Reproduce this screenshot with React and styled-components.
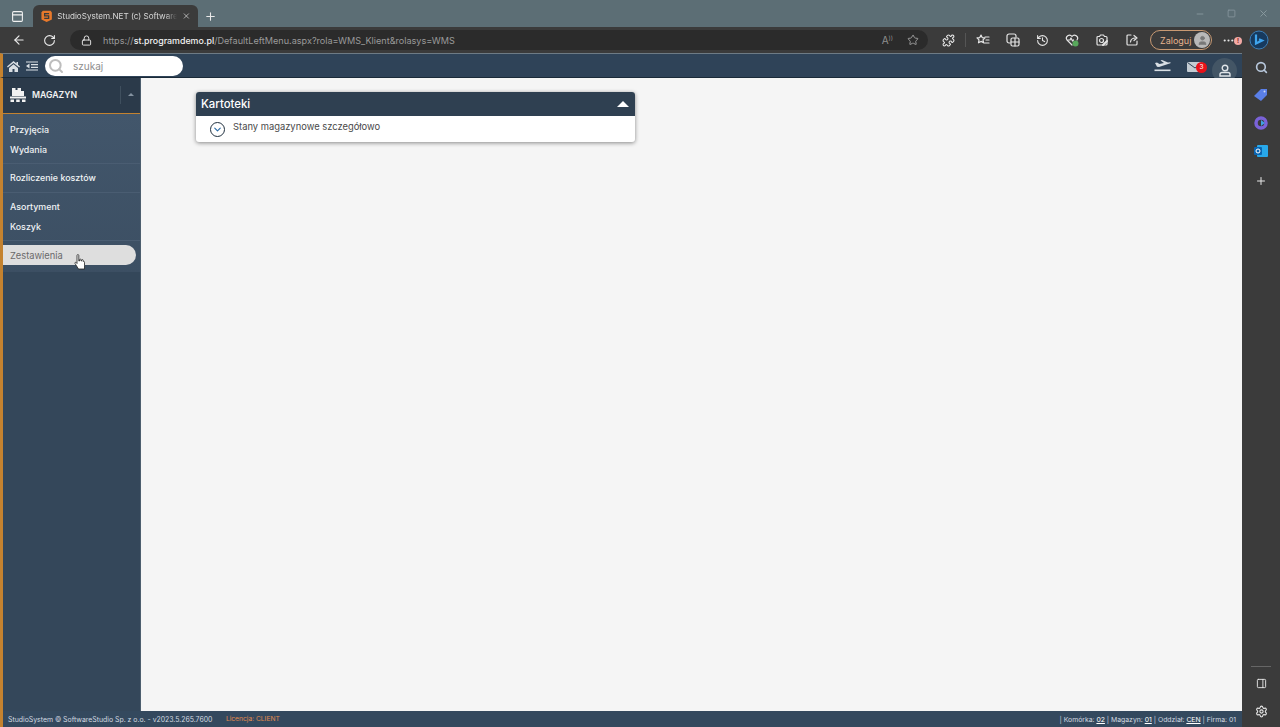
import React from "react";
import styled, { createGlobalStyle } from "styled-components";
import { Search, ChevronDown, Plus, X, RotateCw, ArrowLeft, Lock, Star, Puzzle, History, Settings, Minus, Square, PanelRight, User, MoreHorizontal, PanelTop } from "lucide-react";

const Global = createGlobalStyle`
  html, body { margin: 0; padding: 0; width: 1280px; height: 727px; overflow: hidden; }
  body { font-family: "Inter", "Liberation Sans", sans-serif; background: #3b3b3b; }
  * { box-sizing: border-box; }
`;
const Frame = styled.div`width:1280px;height:727px;display:flex;flex-direction:column;overflow:hidden;`;
const TabStrip = styled.div`height:27px;background:#5c6e75;display:flex;align-items:flex-end;padding-left:8px;color:#e8e8e8;flex:none;`;
const SquareBtn = styled.div`width:18px;height:22px;display:flex;align-items:center;justify-content:center;margin-right:7px;color:#f2f2f2;`;
const Tab = styled.div`width:165px;height:22px;background:#3b3b3b;border-radius:6px 6px 0 0;display:flex;align-items:center;padding:0 7px 0 8px;font-size:8.1px;color:#d8d8d8;white-space:nowrap;`;
const TabTitle = styled.span`width:120px;flex:none;margin:0 5px 0 5px;mask-image:linear-gradient(90deg,#000 90%,transparent);`;
const NewTab = styled.div`width:24px;height:22px;display:flex;align-items:center;justify-content:center;color:#e8e8e8;`;
const WinButtons = styled.div`margin-left:auto;display:flex;gap:22px;align-items:center;height:27px;padding-right:11px;color:#8b9ba1;`;
const AddressRow = styled.div`height:26px;background:#3b3b3b;display:flex;align-items:center;color:#ececec;flex:none;`;
const Nav = styled.div`width:70px;display:flex;align-items:center;gap:17px;padding-left:12px;flex:none;`;
const Pill = styled.div`width:858px;height:20px;background:#2b2b2b;border-radius:10px;display:flex;align-items:center;padding:0 9px 0 11px;font-size:9.1px;color:#9a9a9a;flex:none;`;
const Url = styled.span`margin-left:11px;flex:1;white-space:nowrap;`;
const UrlHost = styled.b`color:#f2f2f2;font-weight:500;font-size:8.85px;`;
const PillIcons = styled.div`display:flex;align-items:center;gap:14px;color:#9a9a9a;`;
const Aa = styled.span`font-size:10px;color:#8f8f8f;`;
const Sup = styled.sup`font-size:6px;`;
const Tools = styled.div`flex:1;display:flex;align-items:center;gap:16px;padding-left:14px;color:#e5e5e5;`;
const Divider = styled.div`width:1px;height:14px;background:#555;margin:0 -6px;`;
const Login = styled.div`height:20px;width:62px;margin-left:-5px;border:1px solid #c99a73;border-radius:10px;display:flex;align-items:center;justify-content:space-between;padding:0 1px 0 9px;font-size:9px;color:#e6b48e;flex:none;`;
const Avatar = styled.div`width:16px;height:16px;border-radius:50%;background:#b8b8b8;display:flex;align-items:center;justify-content:center;color:#777;`;
const Dots = styled.div`position:relative;width:14px;margin-left:-6px;display:flex;`;
const DotBadge = styled.span`position:absolute;right:-6px;top:3px;width:8px;height:8px;border-radius:50%;background:#f3a9a5;color:#7a1a1a;font-size:6px;line-height:8px;text-align:center;font-weight:700;`;
const BingMark = styled.svg`margin-left:-3px;flex:none;`;
const Body = styled.div`flex:1;display:flex;min-height:0;`;
const Page = styled.div`flex:1;display:flex;flex-direction:column;min-width:0;`;
const TopBar = styled.div`height:25px;background:#2f4358;border-top:1px solid #6e7b85;border-left:3px solid #c4822f;border-bottom:1px solid #1a2a38;display:flex;align-items:center;padding:1px 0 0 3px;color:#d9dfe4;flex:none;`;
const TopIcon = styled.div`width:14px;height:14px;display:flex;align-items:center;justify-content:center;margin-right:5px;`;
const SearchBox = styled.div`width:138px;height:20px;margin:-1px 0 0 1px;background:#fff;border-radius:10px;display:flex;align-items:center;padding-left:3px;color:#a8a8a8;font-size:10px;`;
const SearchText = styled.span`margin-left:9px;color:#8d8d8d;`;
const TopRight = styled.div`margin-left:auto;display:flex;align-items:center;height:100%;`;
const MailWrap = styled.div`position:relative;margin:2px 0 0 16px;display:flex;`;
const RedBadge = styled.span`position:absolute;left:9px;top:0;width:11px;height:11px;border-radius:50%;background:#e8121a;color:#fff;font-size:6.5px;line-height:11px;text-align:center;`;
const UserCircle = styled.div`width:25px;height:25px;border-radius:50%;background:#435565;margin:5px 5px -3px 9px;display:flex;align-items:center;justify-content:center;`;
const Main = styled.div`flex:1;display:flex;min-height:0;`;
const Sidebar = styled.aside`width:141px;background:#34475a;border-left:3px solid #c4822f;border-right:1px solid #4d5e6e;flex:none;display:flex;flex-direction:column;`;
const SideHead = styled.div`height:36px;background:#2b3a4a;border-bottom:1px solid #c4822f;display:flex;align-items:center;padding:0 0 2px 7px;color:#f2f2f2;font-size:8.7px;font-weight:600;flex:none;`;
const HeadLabel = styled.span`margin-left:6px;flex:1;`;
const Caret = styled.div`width:21px;height:18px;border-left:1px solid #3f4f5e;display:flex;align-items:center;justify-content:center;margin-right:-1px;`;
const CaretUp = styled.i`display:block;width:0;height:0;border-left:3.5px solid transparent;border-right:3.5px solid transparent;border-bottom:3.5px solid #8492a0;`;
const Menu = styled.nav`background:linear-gradient(#42566b,#3c4f63);padding-top:6px;height:158px;`;
const Group = styled.div`border-bottom:${p => p.$last ? "none" : "1px solid #4a5d72"};padding-bottom:${p => p.$last ? "0" : "4.5px"};margin-bottom:${p => p.$last ? "0" : "4px"};`;
const Item = styled.div`height:19.4px;display:flex;align-items:center;padding-left:7px;font-size:8.9px;font-weight:500;color:#f0f3f5;white-space:nowrap;`;
const Active = styled.div`position:relative;height:20px;width:133px;background:#dedede;border-radius:0 10px 10px 0;display:flex;align-items:center;padding-left:7px;font-size:9.3px;color:#6a6a6a;`;
const Cursor = styled.svg`position:absolute;left:71px;top:9px;`;
const Content = styled.main`flex:1;background:#f5f5f5;padding:14px 55px;min-width:0;`;
const Card = styled.section`width:439px;background:#fff;border-radius:3px;box-shadow:0 1px 4px rgba(0,0,0,.45);`;
const CardHead = styled.header`height:24px;background:#2f4051;border-radius:3px 3px 0 0;display:flex;align-items:center;justify-content:space-between;padding:0 6px 0 5px;color:#fff;font-size:11.4px;font-weight:500;`;
const TriUp = styled.i`display:block;width:0;height:0;border-left:6px solid transparent;border-right:6px solid transparent;border-bottom:6px solid #fff;`;
const CardRow = styled.div`height:26px;display:flex;padding:5px 0 0 14px;font-size:9.4px;color:#4a4a4a;`;
const Circle = styled.div`width:15px;height:15px;margin-top:1px;border:1.5px solid #1f2f3e;border-radius:50%;display:flex;align-items:center;justify-content:center;color:#2b6ca8;margin-right:8px;`;
const Footer = styled.footer`height:16px;background:#34495e;border-left:3px solid #c4822f;display:flex;align-items:center;padding:0 6px 0 5px;font-size:6.9px;color:#d3dae0;flex:none;`;
const Lic = styled.span`margin-left:13.5px;font-size:6.7px;color:#e28a4e;`;
const FootRight = styled.div`margin-left:auto;white-space:pre;font-size:6.85px;`;
const Under = styled.u`color:#fff;`;
const Rail = styled.div`width:38px;background:#3b3b3b;display:flex;flex-direction:column;align-items:center;flex:none;color:#e8e8e8;`;
const RailSlot = styled.div`height:28px;display:flex;align-items:center;justify-content:center;`;
const PlusSlot = styled(RailSlot)`margin-top:2px;`;
const RailBottom = styled.div`margin-top:auto;display:flex;flex-direction:column;align-items:center;width:100%;padding-bottom:2px;`;
const RailLine = styled.div`width:20px;height:1px;background:#666;margin-bottom:2px;`;

const Ico = ({ children, size = 14 }) => (
  <svg width={size} height={size} viewBox="0 0 14 14" fill="none" stroke="currentColor" strokeWidth="1.2" strokeLinecap="round" strokeLinejoin="round">{children}</svg>
);

export default function App() {
  return (
    <Frame>
      <Global />
      <TabStrip>
        <SquareBtn><PanelTop size={13} /></SquareBtn>
        <Tab>
          <svg width="13" height="14" viewBox="0 0 13 14"><path d="M2 1h9l1.500 2v8L6.500 14 .5 11V3z" fill="#e8792b" /><path d="M9.300 4.300H4.200v2.500h4.600v2.900H3.700" fill="none" stroke="#3b3b3b" strokeWidth="1.500" /></svg>
          <TabTitle>StudioSystem.NET (c) SoftwareSt</TabTitle>
          <X size={10} />
        </Tab>
        <NewTab><Plus size={13} /></NewTab>
        <WinButtons><Minus size={10} /><Square size={9} /><X size={11} /></WinButtons>
      </TabStrip>
      <AddressRow>
        <Nav><ArrowLeft size={14} /><RotateCw size={13} /></Nav>
        <Pill>
          <Lock size={11} color="#eee" />
          <Url>https://<UrlHost>st.programdemo.pl</UrlHost>/DefaultLeftMenu.aspx?rola=WMS_Klient&amp;rolasys=WMS</Url>
          <PillIcons><Aa>A<Sup>))</Sup></Aa><Star size={12} /></PillIcons>
        </Pill>
        <Tools>
          <Puzzle size={13} />
          <Divider />
          <Ico><path d="M5 2l1.200 2.600 2.800.3-2 2 .6 2.900L5 8.400 2.500 9.800l.5-2.900-2-2 2.800-.3z" /><path d="M9 4h4M10 7h3M8.500 10H13" /></Ico>
          <Ico><path d="M4 10H3a2 2 0 0 1-2-2V3a2 2 0 0 1 2-2h5a2 2 0 0 1 2 2v1" /><rect x="5" y="5" width="8" height="8" rx="1.500" /><path d="M9 5v8M5 9h8" /></Ico>
          <History size={13} />
          <Ico><path d="M7 12 2 7a3 3 0 0 1 5-3.500A3 3 0 0 1 12 7" /><path d="M3 7h2l1-2 1.500 3L8.500 7" /><circle cx="10.500" cy="10.500" r="3" fill="#58a85c" stroke="none" /></Ico>
          <Ico><path d="M2 4.500a1 1 0 0 1 1-1h1.500L5.500 2h3l1 1.500H11a1 1 0 0 1 1 1V11a1 1 0 0 1-1 1H3a1 1 0 0 1-1-1z" /><circle cx="6.500" cy="7.500" r="2" /><path d="M8 12l4-4" strokeWidth="2" /></Ico>
          <Ico><path d="M6 2H3a1 1 0 0 0-1 1v8a1 1 0 0 0 1 1h8a1 1 0 0 0 1-1V8" /><path d="M5.500 9c.3-2.500 2-4 5-4" /><path d="M9 2.500 12 5 9 7.500" /></Ico>
          <Login>Zaloguj<Avatar><User size={11} fill="#777" /></Avatar></Login>
          <Dots><MoreHorizontal size={13} /><DotBadge>!</DotBadge></Dots>
          <BingMark width="20" height="20" viewBox="0 0 20 20"><circle cx="10" cy="10" r="9" fill="#173a5e" stroke="#3c7fb8" /><path d="M7 4.500v9l6-3-3-1.200" fill="none" stroke="#3fa5ee" strokeWidth="2.200" /></BingMark>
        </Tools>
      </AddressRow>
      <Body>
        <Page>
          <TopBar>
            <TopIcon>
              <svg width="13" height="11" viewBox="0 0 13 11" fill="currentColor"><path d="M6.500 0 0 5.500l.8 1L6.500 2l5.700 4.500.8-1L11 3.800V1H9.500v1.500z" /><path d="M2 7l4.500-3.800L11 7v4H7.500V8h-2v3H2z" /></svg>
            </TopIcon>
            <TopIcon>
              <svg width="12" height="10" viewBox="0 0 12 10" stroke="currentColor" strokeWidth="1.200"><path d="M0 1h12M5 3.700h7M5 6.300h7M0 9h12" /><path d="M3.500 2.500 0 5l3.500 2.500z" fill="currentColor" stroke="none" /></svg>
            </TopIcon>
            <SearchBox><Search size={16} strokeWidth={3} color="#bdbdbd" /><SearchText>szukaj</SearchText></SearchBox>
            <TopRight>
              <svg width="17" height="12" viewBox="0 0 17 12" fill="currentColor"><path d="M1 3 3 2.500l2.500 1.500L10 3 6.500.5 8 0l6 2.500 2-.3c.8 0 1 .8.300 1.100L5 7 3 6.800z" /><rect x="0.500" y="9.500" width="16" height="1.600" /></svg>
              <MailWrap>
                <svg width="16" height="10" viewBox="0 0 16 10"><rect width="16" height="10" rx="1" fill="#c4ccd3" /><path d="M.5.500 8 6 15.500.500" fill="none" stroke="#2f4358" strokeWidth="1" /></svg>
                <RedBadge>3</RedBadge>
              </MailWrap>
              <UserCircle>
                <svg width="12" height="13" viewBox="0 0 12 13" fill="none" stroke="#e0e5e9" strokeWidth="1.400"><circle cx="6" cy="4" r="2.800" /><path d="M1 12v-1.500a2 2 0 0 1 2-2h6a2 2 0 0 1 2 2V12z" /></svg>
              </UserCircle>
            </TopRight>
          </TopBar>
          <Main>
            <Sidebar>
              <SideHead>
                <svg width="16" height="14" viewBox="0 0 16 14" fill="#f2f2f2"><path d="M2 0h3.500v2h2V0H11v3h3v5H2z" /><rect x="0" y="8.500" width="16" height="2" /><rect x="0.500" y="11.500" width="3.500" height="2.500" /><rect x="6.200" y="11.500" width="3.500" height="2.500" /><rect x="12" y="11.500" width="3.500" height="2.500" /></svg>
                <HeadLabel>MAGAZYN</HeadLabel>
                <Caret><CaretUp /></Caret>
              </SideHead>
              <Menu>
                <Group><Item>Przyjęcia</Item><Item>Wydania</Item></Group>
                <Group><Item>Rozliczenie kosztów</Item></Group>
                <Group><Item>Asortyment</Item><Item>Koszyk</Item></Group>
                <Group $last>
                  <Active>
                    Zestawienia
                    <Cursor width="12" height="16" viewBox="0 0 12 16"><path d="M3 1.500c0-1.300 1.800-1.300 1.800 0V7h.7V5.800c0-1 1.500-1 1.500 0V7h.6v-.7c0-1 1.500-1 1.500 0V7.500c.8-.5 1.400 0 1.400.8v3L10.500 15H4.500L1 9.500c-.5-.8.500-1.500 1.200-1L3 9.500z" fill="#fff" stroke="#222" strokeWidth=".8" /></Cursor>
                  </Active>
                </Group>
              </Menu>
            </Sidebar>
            <Content>
              <Card>
                <CardHead>Kartoteki<TriUp /></CardHead>
                <CardRow><Circle><ChevronDown size={11} strokeWidth={2.500} /></Circle>Stany magazynowe szczegółowo</CardRow>
              </Card>
            </Content>
          </Main>
          <Footer>
            StudioSystem © SoftwareStudio Sp. z o.o. - v2023.5.265.7600
            <Lic>Licencja: CLIENT</Lic>
            <FootRight>| Komórka: <Under>02</Under> | Magazyn: <Under>01</Under> | Oddział: <Under>CEN</Under> | Firma: 01</FootRight>
          </Footer>
        </Page>
        <Rail>
          <RailSlot><Search size={13} color="#b8c8dc" strokeWidth={3} /></RailSlot>
          <RailSlot><svg width="14" height="12" viewBox="0 0 14 12"><path d="M0 7 7 0h6v6l-6 6z" fill="#5a7fe8" /><circle cx="10.500" cy="2.500" r="1" fill="#cdd8f5" /></svg></RailSlot>
          <RailSlot><svg width="14" height="14" viewBox="0 0 14 14"><circle cx="7" cy="7" r="5" fill="none" stroke="#7a62d8" strokeWidth="3.500" /><path d="M7 4l4 3-4 3z" fill="#3fa0e0" /></svg></RailSlot>
          <RailSlot><svg width="14" height="14" viewBox="0 0 14 14"><rect x="3" y="1" width="11" height="12" rx="1" fill="#28a8ea" /><rect x="0" y="3" width="8" height="8" rx="1" fill="#0a64b0" /><circle cx="4" cy="7" r="2" fill="none" stroke="#fff" strokeWidth="1" /></svg></RailSlot>
          <PlusSlot><Plus size={12} /></PlusSlot>
          <RailBottom>
            <RailLine />
            <RailSlot><PanelRight size={11} /></RailSlot>
            <RailSlot><Settings size={13} /></RailSlot>
          </RailBottom>
        </Rail>
      </Body>
    </Frame>
  );
}
